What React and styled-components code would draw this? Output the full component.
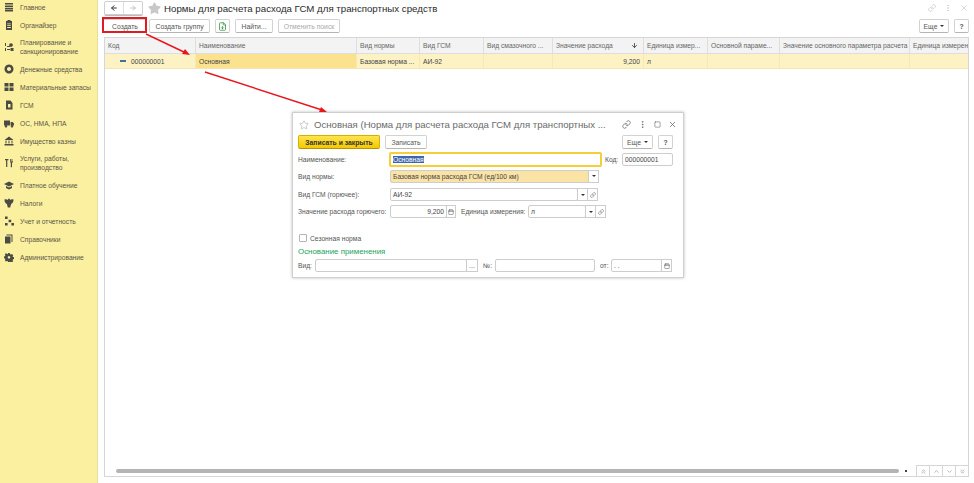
import React from 'react';
import styled, { createGlobalStyle } from 'styled-components';
import {
  ArrowLeft, ArrowRight, Star, Link, MoreVertical, X, Square, Calendar,
  ChevronDown, ChevronUp, ChevronsDown, ChevronsUp, ArrowDown, FileDown,
} from 'lucide-react';

const Global = createGlobalStyle`
  html, body { margin: 0; padding: 0; height: 100%; overflow: hidden; background: #fff; }
  body { font-family: "Liberation Sans", Arial, sans-serif; color: #4a4a4a; }
  #root { height: 100%; }
`;

const Page = styled.div`
  position: relative;
  display: flex;
  width: 974px;
  height: 483px;
  overflow: hidden;
`;

const Sidebar = styled.nav`
  flex: none;
  width: 97px;
  background: #fbefa0;
  border-right: 1px solid #eadf96;
`;

const NavItem = styled.div`
  display: flex;
  align-items: center;
  gap: 6px;
  height: ${(p) => (p.$double ? 26 : 18)}px;
  padding-left: 4px;
  font-size: 6.7px;
  line-height: 9px;
  color: #5a5747;
  &:first-child { margin-top: -2px; }
`;

const NavIcon = styled.svg`
  flex: none;
  width: 10px;
  height: 10px;
  fill: #4b4b45;
`;

const Main = styled.main`
  flex: 1;
  min-width: 0;
  display: flex;
  flex-direction: column;
  padding: 1px 5px 6px 6px;
`;

const TitleBar = styled.div`
  display: flex;
  align-items: center;
  height: 14px;
`;

const NavGroup = styled.div`
  display: flex;
  width: 37px;
  height: 12px;
  border: 1px solid #cfcfcf;
  border-radius: 2px;
  box-shadow: 0 1px 0 #bbb;
`;

const NavBtn = styled.div`
  flex: 1;
  display: flex;
  align-items: center;
  justify-content: center;
  color: ${(p) => (p.$off ? '#aaa' : '#333')};
  & + & { border-left: 1px solid #ddd; }
`;

const PageStar = styled(Star)`
  flex: none;
  margin-left: 5px;
`;

const Title = styled.h1`
  margin: 0 0 0 3px;
  font-size: 9.7px;
  font-weight: 400;
  color: #2a2a2a;
  white-space: nowrap;
`;

const TitleTools = styled.div`
  margin-left: auto;
  display: flex;
  align-items: center;
  gap: 8px;
  padding-right: 1px;
  color: #c4c4c4;
`;

const Toolbar = styled.div`
  display: flex;
  align-items: center;
  gap: 5px;
  height: 14px;
  margin: 4px 0 4px -1px;
`;

const Button = styled.div`
  box-sizing: border-box;
  display: flex;
  align-items: center;
  justify-content: center;
  flex: none;
  width: ${(p) => p.$w}px;
  height: 14px;
  margin-left: ${(p) => p.$ml ?? 0}px;
  font-size: 6.8px;
  font-weight: ${(p) => (p.$primary || p.$bold ? 700 : 400)};
  color: ${(p) => (p.$primary ? '#333' : p.$off ? '#aaa' : '#555')};
  background: ${(p) => (p.$primary ? 'linear-gradient(#ffe44d, #f4c800)' : '#fff')};
  border: 1px solid ${(p) => (p.$primary ? '#d8b000' : '#d2d2d2')};
  border-bottom-color: ${(p) => (p.$primary ? '#b89500' : '#b5b5b5')};
  border-radius: 2px;
`;

const Spacer = styled.div`
  flex: 1;
`;

const Highlight = styled.div`
  position: absolute;
  left: 102px;
  top: 17px;
  width: 41px;
  height: 12px;
  border: 2px solid #e01b22;
`;

const Table = styled.section`
  flex: 1;
  position: relative;
  display: flex;
  flex-direction: column;
  min-height: 0;
  border: 1px solid #d6d6d6;
  overflow: hidden;
`;

const Row = styled.div`
  display: flex;
  flex: none;
  height: ${(p) => p.$h}px;
  background: ${(p) => p.$bg};
  border-bottom: 1px solid ${(p) => p.$line};
`;

const Cell = styled.div`
  box-sizing: border-box;
  flex: none;
  display: flex;
  align-items: center;
  justify-content: ${(p) => (p.$right ? 'flex-end' : 'flex-start')};
  gap: 5px;
  width: ${(p) => p.$w}px;
  padding: 0 3px 0 ${(p) => p.$pad ?? 3}px;
  font-size: 6.7px;
  white-space: nowrap;
  overflow: hidden;
  color: ${(p) => p.$color};
  background: ${(p) => p.$bg || 'transparent'};
  border-right: 1px solid ${(p) => p.$line};
`;

const HeadSort = styled(ArrowDown)`
  margin-left: auto;
  margin-right: 2px;
  color: #444;
`;

const Minus = styled.span`
  width: 6px;
  height: 2px;
  background: #44709c;
`;

const Scroll = styled.div`
  position: absolute;
  left: 0;
  right: 0;
  bottom: 0;
  height: 11px;
  display: flex;
  align-items: center;
`;

const Thumb = styled.div`
  width: 783px;
  height: 4px;
  margin-left: 11px;
  background: #b4b4b4;
  border-radius: 2px;
`;

const ThumbEnd = styled.span`
  margin-left: 6px;
  width: 2px;
  height: 2px;
  background: #444;
`;

const Pager = styled.div`
  display: flex;
  margin-left: auto;
  height: 11px;
`;

const PagerBtn = styled.div`
  width: 12px;
  display: flex;
  align-items: center;
  justify-content: center;
  color: #8a8a8a;
  border-left: 1px solid #d6d6d6;
  border-top: 1px solid #d6d6d6;
`;

const Arrows = styled.svg`
  position: absolute;
  left: 0;
  top: 0;
  width: 974px;
  height: 483px;
  pointer-events: none;
  z-index: 3;
`;

const Dialog = styled.section`
  position: absolute;
  left: 292px;
  top: 112px;
  box-sizing: border-box;
  width: 392px;
  height: 166px;
  padding: 0 10px 0 5px;
  background: #fff;
  border: 1px solid #cfcfcf;
  box-shadow: 0 0 3px rgba(0, 0, 0, 0.25);
  z-index: 2;
`;

const DialogHead = styled.div`
  display: flex;
  align-items: center;
  height: 21px;
  padding-top: 1px;
  margin-right: -4px;
`;

const DialogStar = styled(Star)`
  flex: none;
  margin-left: 1px;
`;

const DialogTitle = styled.div`
  margin-left: 5px;
  font-size: 9.6px;
  color: #6a6a6a;
  white-space: nowrap;
`;

const DialogTools = styled.div`
  margin-left: auto;
  display: flex;
  align-items: center;
  gap: 7px;
  color: #666;
`;

const FormRow = styled.div`
  display: flex;
  align-items: center;
  height: ${(p) => p.$h}px;
  margin-bottom: ${(p) => p.$mb ?? 0}px;
`;

const Label = styled.span`
  flex: none;
  box-sizing: border-box;
  width: ${(p) => (p.$w ? `${p.$w}px` : 'auto')};
  padding-left: ${(p) => p.$pl ?? 0}px;
  font-size: 6.7px;
  color: #555;
  white-space: nowrap;
`;

const Input = styled.div`
  box-sizing: border-box;
  flex: none;
  display: flex;
  align-items: center;
  justify-content: ${(p) => (p.$right ? 'flex-end' : 'flex-start')};
  width: ${(p) => p.$w}px;
  height: ${(p) => p.$h ?? 13}px;
  padding: 0 2px;
  font-size: 6.7px;
  color: #444;
  background: ${(p) => p.$bg || '#fff'};
  border: ${(p) => (p.$focus ? '2px solid #f4cf3a' : '1px solid #cdcdcd')};
  border-radius: 2px;
`;

const Addon = styled.div`
  box-sizing: border-box;
  flex: none;
  display: flex;
  align-items: center;
  justify-content: center;
  width: ${(p) => p.$w ?? 11}px;
  height: 13px;
  margin-left: -1px;
  font-size: 7px;
  color: #555;
  background: #fff;
  border: 1px solid #cdcdcd;
`;

const Tri = styled.span`
  width: 0;
  height: 0;
  margin-left: ${(p) => p.$ml ?? 0}px;
  border-left: 2px solid transparent;
  border-right: 2px solid transparent;
  border-top: 2px solid #333;
`;

const Selected = styled.span`
  background: #3d68ad;
  color: #fff;
`;

const Check = styled.span`
  box-sizing: border-box;
  width: 8px;
  height: 8px;
  margin: 0 3px 0 1px;
  border: 1px solid #b5b5b5;
  border-radius: 1px;
`;

const Group = styled.div`
  height: 13px;
  font-size: 7.9px;
  line-height: 12px;
  color: #1aa35b;
`;

const icons = [
  <path d="M1 1h8v1.6H1zM1 3.4h8V5H1zM1 5.8h8v1.6H1zM1 8h8v1.4H1z" />,
  <path fillRule="evenodd" d="M2 1h1.5V0h3v1H8v9H2zM3.2 3.500v.8h3.600v-.8zM3.200 5.300v.8h3.600v-.8zM3.200 7.100v.8h3.600v-.8z" />,
  <path d="M1 1h1v3H1zM1 6h1v3H1zM3 4h3v1H3zM3 7h3v1H3zM7 1.200a1.800 1.800 0 1 1-.01 0zM6.500 6h3v3h-3z" />,
  <path fillRule="evenodd" d="M5 .5a4.500 4.500 0 1 1-.01 0zM5 3a2 2 0 1 0 .01 0z" />,
  <path d="M.5 1h4v3.600h-4zM5.500 1h4v3.600h-4zM.5 5.500h4v3.600h-4zM5.500 5.500h4v3.600h-4z" />,
  <path fillRule="evenodd" d="M2 .5h4.500L8.500 3v6.500H2zM4 4v3.500h2.500V4z" />,
  <path d="M0 2.500h6v5H0zM6.600 4h2L10 5.600v1.900H6.600zM2 7.200a1.200 1.200 0 1 1-.01 0zM8 7.200a1.200 1.200 0 1 1-.01 0z" />,
  <path d="M5 .5 9.500 4H.5zM1.500 4.600h1v3h-1zM4.500 4.600h1v3h-1zM7.500 4.600h1v3h-1zM.5 8h9v1.400h-9z" />,
  <path d="M1 1h3.400v1.200H3.300V9H2.100V2.200H1zM6.200 1h1.200v2.400h1.200V1h.4v3.400H8v4.800H6.800V4.400H6.200z" />,
  <path d="M5 1.500 10 4 5 6.500 0 4zM2 6l3 1.500L8 6v2L5 9.400 2 8z" />,
  <path d="M5 .5c.8 0 1 .8 1 1.400 1-.8 2.400-.8 3.500-.4 0 2-.6 3.600-2.400 4.400L6.200 9.500H3.800L2.900 5.900C1.100 5.100.5 3.500.5 1.500c1.100-.4 2.500-.4 3.500.4 0-.6.200-1.400 1-1.400z" />,
  <path d="M1 .5h2.600v2.600H1zM4.600 3.700h2.600v2.600H4.600zM1 6.900h2.600v2.600H1zM7.400 6.900H10v2.600H7.400z" />,
  <path d="M2.500 .5h6v7.500h-1V1.500h-5zM1 2.500h5.500v7H1z" />,
  <path fillRule="evenodd" d="M4 .3h2l.3 1.300 1.100.5 1.200-.7 1.400 1.400-.7 1.200.5 1.100 1.200.3v2l-1.200.3-.5 1.100.7 1.200-1.400 1.400-1.200-.7-1.100.5L6 11.500H4L3.700 10.200l-1.100-.5-1.200.7L0 9l.7-1.200-.5-1.100L-1 6.400v-2l1.200-.3.500-1.100L0 1.800 1.400.4l1.200.7L3.700 1.600zM5 3.900a1.500 1.500 0 1 0 .01 0z" transform="translate(.8 .8) scale(.84)" />,
];

const nav = [
  ['Главное'], ['Органайзер'], ['Планирование и санкционирование', true], ['Денежные средства'],
  ['Материальные запасы'], ['ГСМ'], ['ОС, НМА, НПА'], ['Имущество казны'],
  ['Услуги, работы, производство', true], ['Платное обучение'], ['Налоги'], ['Учет и отчетность'],
  ['Справочники'], ['Администрирование'],
];

const columns = [
  ['Код', 91], ['Наименование', 161], ['Вид нормы', 63], ['Вид ГСМ', 64], ['Вид смазочного ...', 69],
  ['Значение расхода', 91], ['Единица измер...', 64], ['Основной параме...', 72],
  ['Значение основного параметра расчета', 130], ['Единица измерен', 60],
];

export default function App() {
  return (
    <Page>
      <Global />
      <Sidebar>
        {nav.map(([label, double], i) => (
          <NavItem key={label} $double={double}>
            <NavIcon viewBox="0 0 10 10">{icons[i]}</NavIcon>
            <span>{label}</span>
          </NavItem>
        ))}
      </Sidebar>
      <Main>
        <TitleBar>
          <NavGroup>
            <NavBtn><ArrowLeft size={8} strokeWidth={3} /></NavBtn>
            <NavBtn $off><ArrowRight size={8} strokeWidth={2} /></NavBtn>
          </NavGroup>
          <PageStar size={13} color="#c8c8c8" fill="#c8c8c8" />
          <Title>Нормы для расчета расхода ГСМ для транспортных средств</Title>
          <TitleTools>
            <Link size={8} />
            <MoreVertical size={8} />
            <X size={8} />
          </TitleTools>
        </TitleBar>
        <Toolbar>
          <Button $w={44}>Создать</Button>
          <Button $w={61} $ml={-3}>Создать группу</Button>
          <Button $w={15}><FileDown size={9} color="#2f8f3a" /></Button>
          <Button $w={38}>Найти...</Button>
          <Button $w={62} $off>Отменить поиск</Button>
          <Spacer />
          <Button $w={30}>Еще <Tri $ml={3} /></Button>
          <Button $w={15} $bold>?</Button>
        </Toolbar>
        <Table>
          <Row $h={15} $bg="#f3f3f3" $line="#dedede">
            {columns.map(([label, w]) => (
              <Cell key={label} $w={w} $color="#666" $line="#dedede">
                {label}
                {label === 'Значение расхода' && <HeadSort size={7} strokeWidth={3} />}
              </Cell>
            ))}
          </Row>
          <Row $h={14} $bg="#fdf2c4" $line="#f1e6b6">
            <Cell $w={91} $pad={15} $color="#444" $line="#f4e8b4"><Minus />000000001</Cell>
            <Cell $w={161} $bg="#fbe28e" $color="#444" $line="#f4e8b4">Основная</Cell>
            <Cell $w={63} $color="#444" $line="#f4e8b4">Базовая норма ...</Cell>
            <Cell $w={64} $color="#444" $line="#f4e8b4">АИ-92</Cell>
            <Cell $w={69} $color="#444" $line="#f4e8b4" />
            <Cell $w={91} $right $color="#444" $line="#f4e8b4">9,200</Cell>
            <Cell $w={64} $color="#444" $line="#f4e8b4">л</Cell>
            <Cell $w={72} $color="#444" $line="#f4e8b4" />
            <Cell $w={130} $color="#444" $line="#f4e8b4" />
            <Cell $w={60} $color="#444" $line="#f4e8b4" />
          </Row>
          <Scroll>
            <Thumb />
            <ThumbEnd />
            <Pager>
              <PagerBtn><ChevronsUp size={7} /></PagerBtn>
              <PagerBtn><ChevronUp size={7} /></PagerBtn>
              <PagerBtn><ChevronDown size={7} /></PagerBtn>
              <PagerBtn><ChevronsDown size={7} /></PagerBtn>
            </Pager>
          </Scroll>
        </Table>
      </Main>
      <Highlight />
      <Dialog>
        <DialogHead>
          <DialogStar size={10} color="#aaa" strokeWidth={1.5} />
          <DialogTitle>Основная (Норма для расчета расхода ГСМ для транспортных ...</DialogTitle>
          <DialogTools>
            <Link size={9} />
            <MoreVertical size={9} />
            <Square size={7} />
            <X size={9} />
          </DialogTools>
        </DialogHead>
        <FormRow $h={14} $mb={2}>
          <Button $w={82} $primary>Записать и закрыть</Button>
          <Button $w={42} $ml={5}>Записать</Button>
          <Spacer />
          <Button $w={31}>Еще <Tri $ml={3} /></Button>
          <Button $w={15} $ml={5} $bold>?</Button>
        </FormRow>
        <FormRow $h={16} $mb={2}>
          <Label $w={91}>Наименование:</Label>
          <Input $w={213} $h={15} $focus><Selected>Основная</Selected></Input>
          <Label $w={20} $pl={3}>Код:</Label>
          <Input $w={51}>000000001</Input>
        </FormRow>
        <FormRow $h={14} $mb={5}>
          <Label $w={92}>Вид нормы:</Label>
          <Input $w={199} $bg="#fbe3a6">Базовая норма расхода ГСМ (ед/100 км)</Input>
          <Addon><Tri /></Addon>
        </FormRow>
        <FormRow $h={13} $mb={4}>
          <Label $w={92}>Вид ГСМ (горючее):</Label>
          <Input $w={188}>АИ-92</Input>
          <Addon><Tri /></Addon>
          <Addon><Link size={6} /></Addon>
        </FormRow>
        <FormRow $h={13} $mb={14}>
          <Label $w={92}>Значение расхода горючего:</Label>
          <Input $w={57} $right>9,200</Input>
          <Addon $w={10}><Calendar size={6} /></Addon>
          <Label $w={72} $pl={5}>Единица измерения:</Label>
          <Input $w={58}>л</Input>
          <Addon><Tri /></Addon>
          <Addon><Link size={6} /></Addon>
        </FormRow>
        <FormRow $h={12} $mb={2}>
          <Check />
          <Label>Сезонная норма</Label>
        </FormRow>
        <Group>Основание применения</Group>
        <FormRow $h={13}>
          <Label $w={17}>Вид:</Label>
          <Input $w={152} />
          <Addon $w={12}>...</Addon>
          <Label $w={17} $pl={5}>№:</Label>
          <Input $w={100} />
          <Label $w={16} $pl={5}>от:</Label>
          <Input $w={51}>. .</Input>
          <Addon><Calendar size={6} /></Addon>
        </FormRow>
      </Dialog>
      <Arrows viewBox="0 0 974 483">
        <g stroke="#e8161d" strokeWidth="1.4" fill="#e8161d">
          <line x1="146" y1="34" x2="186" y2="53" />
          <path d="M190 55 L182 54 L185 49 Z" stroke="none" />
          <line x1="205" y1="72" x2="322" y2="110" />
          <path d="M327 112 L319 112 L321 107 Z" stroke="none" />
        </g>
      </Arrows>
    </Page>
  );
}
